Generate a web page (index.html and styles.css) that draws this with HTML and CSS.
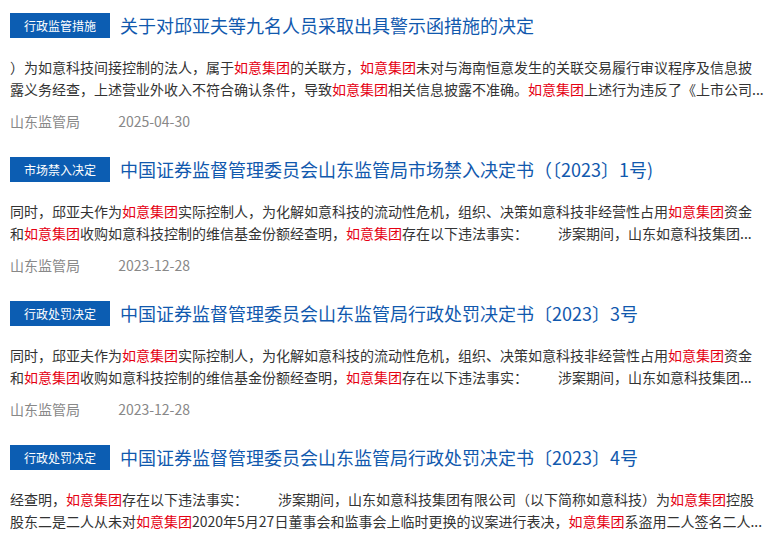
FILE: index.html
```html
<!DOCTYPE html>
<html lang="zh-CN">
<head>
    <meta charset="UTF-8">
    <meta name="viewport" content="width=device-width, initial-scale=1.0">
    <title>如意集团 - 监管公告</title>
    <link rel="stylesheet" href="styles.css">
</head>
<body>
    <div class="list">
        <div class="item">
            <div class="item-head">
                <span class="tag">行政监管措施</span>
                <a class="item-title" href="#">关于对邱亚夫等九名人员采取出具警示函措施的决定</a>
            </div>
            <p class="item-text">）为如意科技间接控制的法人，属于<em>如意集团</em>的关联方，<em>如意集团</em>未对与海南恒意发生的关联交易履行审议程序及信息披露义务经查，上述营业外收入不符合确认条件，导致<em>如意集团</em>相关信息披露不准确。<em>如意集团</em>上述行为违反了《上市公司...</p>
            <div class="item-meta">
                <span>山东监管局</span>
                <span class="date">2025-04-30</span>
            </div>
        </div>

        <div class="item">
            <div class="item-head">
                <span class="tag">市场禁入决定</span>
                <a class="item-title" href="#">中国证券监督管理委员会山东监管局市场禁入决定书（〔2023〕1号)</a>
            </div>
            <p class="item-text">同时，邱亚夫作为<em>如意集团</em>实际控制人，为化解如意科技的流动性危机，组织、决策如意科技非经营性占用<em>如意集团</em>资金和<em>如意集团</em>收购如意科技控制的维信基金份额经查明，<em>如意集团</em>存在以下违法事实：<span class="gap"></span>涉案期间，山东如意科技集团...</p>
            <div class="item-meta">
                <span>山东监管局</span>
                <span class="date">2023-12-28</span>
            </div>
        </div>

        <div class="item">
            <div class="item-head">
                <span class="tag">行政处罚决定</span>
                <a class="item-title" href="#">中国证券监督管理委员会山东监管局行政处罚决定书〔2023〕3号</a>
            </div>
            <p class="item-text">同时，邱亚夫作为<em>如意集团</em>实际控制人，为化解如意科技的流动性危机，组织、决策如意科技非经营性占用<em>如意集团</em>资金和<em>如意集团</em>收购如意科技控制的维信基金份额经查明，<em>如意集团</em>存在以下违法事实：<span class="gap"></span>涉案期间，山东如意科技集团...</p>
            <div class="item-meta">
                <span>山东监管局</span>
                <span class="date">2023-12-28</span>
            </div>
        </div>

        <div class="item">
            <div class="item-head">
                <span class="tag">行政处罚决定</span>
                <a class="item-title" href="#">中国证券监督管理委员会山东监管局行政处罚决定书〔2023〕4号</a>
            </div>
            <p class="item-text">经查明，<em>如意集团</em>存在以下违法事实：<span class="gap"></span>涉案期间，山东如意科技集团有限公司（以下简称如意科技）为<em>如意集团</em>控股股东二是二人从未对<em>如意集团</em>2020年5月27日董事会和监事会上临时更换的议案进行表决，<em>如意集团</em>系盗用二人签名二人...</p>
            <div class="item-meta">
                <span>山东监管局</span>
                <span class="date">2023-12-28</span>
            </div>
        </div>
    </div>
</body>
</html>
```

FILE: styles.css
```css
body {
    margin: 0;
    padding: 13px 10px 0;
    font-family: "Noto Sans CJK SC", "Noto Sans", sans-serif;
    color: #333;
    background-color: #fff;
    overflow: hidden;
}

.list {
    width: 755px;
}

.item {
    margin-bottom: 25px;
}

.item-head {
    display: flex;
    align-items: center;
    height: 25px;
}

.tag {
    flex: none;
    height: 25px;
    line-height: 25px;
    padding: 0 14px;
    background-color: #0c5db2;
    color: #fff;
    font-size: 12px;
}

.item-title {
    margin-left: 10px;
    color: #1159ae;
    font-size: 18px;
    line-height: 25px;
    text-decoration: none;
    white-space: nowrap;
}

.item-text {
    margin: 18px 0 0;
    font-size: 14px;
    line-height: 22px;
    max-height: 44px;
    overflow: hidden;
}

.item-text em {
    font-style: normal;
    color: #e50012;
}

.gap {
    display: inline-block;
    width: 30px;
}

.item-meta {
    margin-top: 10px;
    font-size: 14px;
    line-height: 22px;
    color: #888;
}

.date {
    margin-left: 35px;
}
```
